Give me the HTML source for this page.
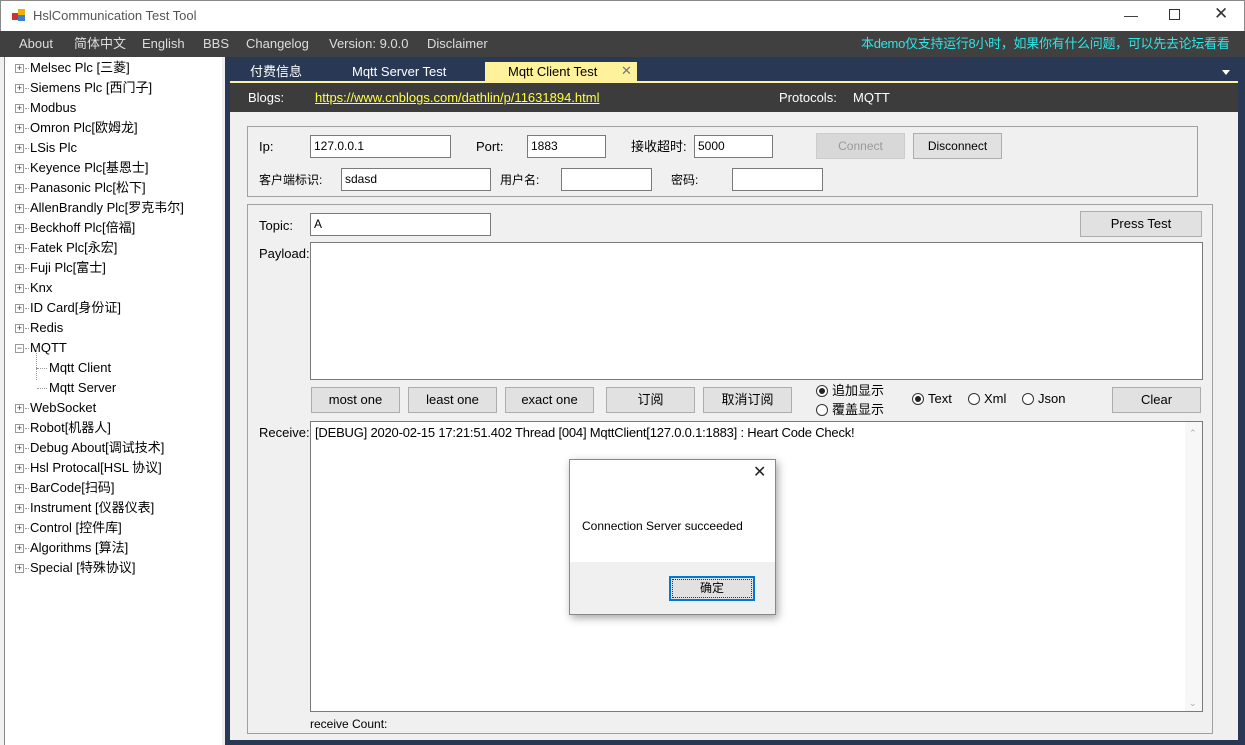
<!DOCTYPE html>
<html><head><meta charset="utf-8"><style>
*{box-sizing:border-box;margin:0;padding:0}
body{width:1245px;height:745px;position:relative;overflow:hidden;background:#fff;font-family:"Liberation Sans","Noto Sans CJK SC",sans-serif;font-size:12px;color:#000;line-height:16px}
.a{position:absolute;white-space:nowrap;line-height:16px}
.tb{border:1px solid #7a7a7a;background:#fff;padding:3px 3px;font-size:12px;line-height:15px}
.btn{border:1px solid #adadad;background:#e1e1e1;text-align:center;font-size:12px}
.grp{border:1px solid #a0a0a0}
.ex{position:absolute;width:9px;height:9px;border:1px solid #999;background:#fff;font-size:9px;line-height:7px;text-align:center;color:#333}
.rd{display:inline-block;width:12px;height:12px;border:1px solid #333;border-radius:50%;vertical-align:-2px;margin-right:4px;position:relative;background:#fff}
.rd.on::after{content:"";position:absolute;left:2px;top:2px;width:6px;height:6px;border-radius:50%;background:#222}
</style></head><body>
<!-- title -->
<div class="a" style="left:0;top:0;width:1245px;height:31px;background:#fff;border:1px solid #888;border-bottom:none"></div>
<div class="a" style="left:12px;top:9px;width:14px;height:12px"><div style="position:absolute;left:0;top:4px;width:7px;height:7px;background:#c33"></div><div style="position:absolute;left:6px;top:0;width:7px;height:7px;background:#f0b000"></div><div style="position:absolute;left:6px;top:6px;width:7px;height:6px;background:#3a7fd0"></div></div>
<div class="a" style="left:33px;top:8px;font-size:13px;color:#555">HslCommunication Test Tool</div>
<div class="a" style="left:1124px;top:7px;font-size:14px;color:#333">&#8212;</div>
<div class="a" style="left:1169px;top:9px;width:11px;height:11px;border:1px solid #333"></div>
<div class="a" style="left:1214px;top:6px;font-size:17px;color:#333">&#10005;</div>
<!-- menu -->
<div class="a" style="left:0;top:31px;width:1245px;height:26px;background:#404040"></div>
<div class="a" style="left:19px;top:36px;font-size:13px;color:#ddd">About</div>
<div class="a" style="left:74px;top:36px;font-size:13px;color:#ddd">简体中文</div>
<div class="a" style="left:142px;top:36px;font-size:13px;color:#ddd">English</div>
<div class="a" style="left:203px;top:36px;font-size:13px;color:#ddd">BBS</div>
<div class="a" style="left:246px;top:36px;font-size:13px;color:#ddd">Changelog</div>
<div class="a" style="left:329px;top:36px;font-size:13px;color:#ddd">Version: 9.0.0</div>
<div class="a" style="left:427px;top:36px;font-size:13px;color:#ddd">Disclaimer</div>
<div class="a" style="left:861px;top:36px;font-size:13px;color:#2ee6e6;letter-spacing:-0.3px">本demo仅支持运行8小时，如果你有什么问题，可以先去论坛看看</div>
<!-- left tree -->
<div class="a" style="left:0;top:57px;width:5px;height:688px;background:#f0f0f0;border-right:1px solid #888"></div>
<div class="a" style="left:222px;top:57px;width:3px;height:688px;background:#f0f0f0"></div>
<div id="tree"></div>
<!-- right navy -->
<div class="a" style="left:225px;top:57px;width:1020px;height:688px;background:#293955"></div>
<div class="a" style="left:250px;top:64px;font-size:13px;color:#fff">付费信息</div>
<div class="a" style="left:352px;top:64px;font-size:13px;color:#fff">Mqtt Server Test</div>
<div class="a" style="left:485px;top:62px;width:152px;height:20px;background:#fff29d"></div>
<div class="a" style="left:508px;top:64px;font-size:13px;color:#000">Mqtt Client Test</div>
<div class="a" style="left:621px;top:63px;font-size:13px;color:#777">&#10005;</div>
<div class="a" style="left:1222px;top:70px;width:0;height:0;border-left:4px solid transparent;border-right:4px solid transparent;border-top:5px solid #fff"></div>
<div class="a" style="left:230px;top:81px;width:1008px;height:2px;background:#fff29d"></div>
<div class="a" style="left:230px;top:83px;width:1008px;height:29px;background:#3c3c3c"></div>
<div class="a" style="left:248px;top:90px;font-size:13px;color:#fff">Blogs:</div>
<div class="a" style="left:315px;top:90px;font-size:13px;color:#ffff40;text-decoration:underline">https://www.cnblogs.com/dathlin/p/11631894.html</div>
<div class="a" style="left:779px;top:90px;font-size:13px;color:#fff">Protocols:</div>
<div class="a" style="left:853px;top:90px;font-size:13px;color:#fff">MQTT</div>
<div class="a" style="left:230px;top:112px;width:1008px;height:628px;background:#f0f0f0"></div>
<!-- group 1 -->
<div class="a grp" style="left:247px;top:126px;width:951px;height:71px"></div>
<div class="a" style="left:259px;top:139px;font-size:13px">Ip:</div>
<div class="a tb" style="left:310px;top:135px;width:141px;height:23px">127.0.0.1</div>
<div class="a" style="left:476px;top:139px;font-size:13px">Port:</div>
<div class="a tb" style="left:527px;top:135px;width:79px;height:23px">1883</div>
<div class="a" style="left:631px;top:139px;font-size:13px">接收超时:</div>
<div class="a tb" style="left:694px;top:135px;width:79px;height:23px">5000</div>
<div class="a btn" style="left:816px;top:133px;width:89px;height:26px;line-height:24px;color:#999;background:#d8d8d8;border-color:#ccc">Connect</div>
<div class="a btn" style="left:913px;top:133px;width:89px;height:26px;line-height:24px">Disconnect</div>
<div class="a" style="left:259px;top:172px;font-size:12px">客户端标识:</div>
<div class="a tb" style="left:341px;top:168px;width:150px;height:23px">sdasd</div>
<div class="a" style="left:500px;top:172px">用户名:</div>
<div class="a tb" style="left:561px;top:168px;width:91px;height:23px"></div>
<div class="a" style="left:671px;top:172px">密码:</div>
<div class="a tb" style="left:732px;top:168px;width:91px;height:23px"></div>
<!-- group 2 -->
<div class="a grp" style="left:247px;top:204px;width:966px;height:530px"></div>
<div class="a" style="left:259px;top:218px;font-size:13px">Topic:</div>
<div class="a tb" style="left:310px;top:213px;width:181px;height:23px">A</div>
<div class="a btn" style="left:1080px;top:211px;width:122px;height:26px;line-height:24px;font-size:13px">Press Test</div>
<div class="a" style="left:259px;top:246px;font-size:13px">Payload:</div>
<div class="a tb" style="left:310px;top:242px;width:893px;height:138px"></div>
<div class="a btn" style="left:311px;top:387px;width:89px;height:26px;line-height:24px;font-size:13px">most one</div>
<div class="a btn" style="left:408px;top:387px;width:89px;height:26px;line-height:24px;font-size:13px">least one</div>
<div class="a btn" style="left:505px;top:387px;width:89px;height:26px;line-height:24px;font-size:13px">exact one</div>
<div class="a btn" style="left:606px;top:387px;width:89px;height:26px;line-height:24px;font-size:13px">订阅</div>
<div class="a btn" style="left:703px;top:387px;width:89px;height:26px;line-height:24px;font-size:13px">取消订阅</div>
<div class="a" style="left:816px;top:383px;font-size:13px"><span class="rd on"></span>追加显示</div>
<div class="a" style="left:816px;top:402px;font-size:13px"><span class="rd"></span>覆盖显示</div>
<div class="a" style="left:912px;top:391px;font-size:13px"><span class="rd on"></span>Text</div>
<div class="a" style="left:968px;top:391px;font-size:13px"><span class="rd"></span>Xml</div>
<div class="a" style="left:1022px;top:391px;font-size:13px"><span class="rd"></span>Json</div>
<div class="a btn" style="left:1112px;top:387px;width:89px;height:26px;line-height:24px;font-size:13px">Clear</div>
<div class="a" style="left:259px;top:425px;font-size:13px">Receive:</div>
<div class="a tb" style="left:310px;top:421px;width:893px;height:291px;padding:3px 4px;font-size:13px;letter-spacing:-0.2px">[DEBUG] 2020-02-15 17:21:51.402 Thread [004] MqttClient[127.0.0.1:1883] : Heart Code Check!</div>
<div class="a" style="left:1185px;top:422px;width:17px;height:289px;background:#f7f7f7"></div>
<div class="a" style="left:1189px;top:425px;font-size:9px;color:#aaa">&#8963;</div>
<div class="a" style="left:1189px;top:695px;font-size:9px;color:#aaa">&#8964;</div>
<div class="a" style="left:310px;top:716px;font-size:12px">receive Count:</div>
<!-- dialog -->
<div class="a" style="left:569px;top:459px;width:207px;height:156px;background:#fff;border:1px solid #888;box-shadow:2px 3px 8px rgba(0,0,0,.35)"></div>
<div class="a" style="left:753px;top:465px;font-size:16px;color:#222">&#10005;</div>
<div class="a" style="left:582px;top:518px;font-size:12px;color:#000">Connection Server succeeded</div>
<div class="a" style="left:570px;top:562px;width:205px;height:52px;background:#f0f0f0"></div>
<div class="a" style="left:669px;top:576px;width:86px;height:25px;border:2px solid #0078d7;background:#e1e1e1;text-align:center;font-size:12px"><div style="border:1px dotted #333;margin:1px;height:19px;line-height:17px">确定</div></div>
<script>
var t=[["Melsec Plc [三菱]",0],["Siemens Plc [西门子]",0],["Modbus",0],["Omron Plc[欧姆龙]",0],["LSis Plc",0],["Keyence Plc[基恩士]",0],["Panasonic Plc[松下]",0],["AllenBrandly Plc[罗克韦尔]",0],["Beckhoff Plc[倍福]",0],["Fatek Plc[永宏]",0],["Fuji Plc[富士]",0],["Knx",0],["ID Card[身份证]",0],["Redis",0],["MQTT",2],["Mqtt Client",1],["Mqtt Server",1],["WebSocket",0],["Robot[机器人]",0],["Debug About[调试技术]",0],["Hsl Protocal[HSL 协议]",0],["BarCode[扫码]",0],["Instrument [仪器仪表]",0],["Control [控件库]",0],["Algorithms [算法]",0],["Special [特殊协议]",0]];
var h="";t.forEach(function(e,i){var y=60+i*20;
if(e[1]==1){h+='<div class="a" style="left:36px;top:'+(y-12)+'px;width:1px;height:'+(i==15?20:12)+'px;border-left:1px dotted #999"></div><div class="a" style="left:37px;top:'+(y+8)+'px;width:10px;border-top:1px dotted #999"></div><div class="a" style="left:49px;top:'+y+'px;font-size:13px">'+e[0]+'</div>';}
else{h+='<div class="ex" style="left:15px;top:'+(y+4)+'px">'+(e[1]==2?'−':'+')+'</div><div class="a" style="left:25px;top:'+(y+8)+'px;width:4px;border-top:1px dotted #999"></div><div class="a" style="left:30px;top:'+y+'px;font-size:13px">'+e[0]+'</div>';}
});document.getElementById("tree").innerHTML=h;
</script>
</body></html>
